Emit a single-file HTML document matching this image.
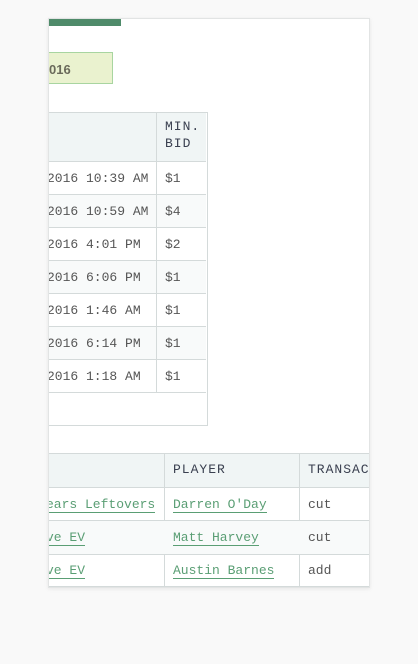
<!DOCTYPE html><html><head><style>
body{margin:0;background:#f9f9f9;width:418px;height:664px;position:relative;overflow:hidden;font-family:"Liberation Mono",monospace;}
.p{position:absolute;left:48px;top:18px;width:320px;height:568px;background:#fff;border:1px solid #e2e4e4;box-shadow:0 1px 4px rgba(0,0,0,.08);overflow:hidden}
.a{position:absolute}
.c{position:absolute;box-sizing:border-box;font-size:13px;color:#555;white-space:nowrap;line-height:33px}
a{color:#5a9e74;text-decoration:none;border-bottom:1px solid #5a9e74;line-height:15px;display:inline-block}
</style></head><body>
<div class="p">
<div class="a" style="left:0;top:0;width:72px;height:7px;background:#4f8b6a"></div>
<div class="a" style="left:-10px;top:33px;width:72px;height:30px;background:#eaf2cf;border:1px solid #a8d5a0"></div>
<div class="a" style="left:0;top:43px;font:bold 13px 'Liberation Sans',sans-serif;color:#6a6a5a">016</div>
<div class="a" style="left:-2px;top:93px;width:159px;height:312px;border:1px solid #d4dada"></div>
<div class="a" style="left:-1px;top:94px;width:158px;height:48px;background:#f0f5f5;border-bottom:1px solid #d4dada"></div>
<div class="a" style="left:107px;top:94px;width:1px;height:279px;background:#d4dada"></div>
<div class="c" style="left:116px;top:99px;line-height:17px;color:#3a4050;letter-spacing:1px">MIN.<br>BID</div>
<div id="t1"></div>
<div class="a" style="left:-1px;top:434px;width:330px;height:33px;background:#f0f5f5;border-top:1px solid #d4dada;border-bottom:1px solid #d4dada"></div>
<div class="a" style="left:115px;top:434px;width:1px;height:134px;background:#d4dada"></div>
<div class="a" style="left:250px;top:434px;width:1px;height:134px;background:#d4dada"></div>
<div class="c" style="left:124px;top:434px;color:#3a4050;letter-spacing:1px">PLAYER</div>
<div class="c" style="left:259px;top:434px;color:#3a4050;letter-spacing:1px">TRANSACTION</div>
<div class="a" style="left:0;top:501px;width:330px;height:33px;background:#f8fafa;border-top:1px solid #d4dada;border-bottom:1px solid #d4dada"></div>
<div class="c" style="left:-3px;top:469px"><a>ears Leftovers</a></div>
<div class="c" style="left:124px;top:469px"><a>Darren O'Day</a></div>
<div class="c" style="left:259px;top:469px">cut</div>
<div class="c" style="left:-3px;top:502px"><a>ve EV</a></div>
<div class="c" style="left:124px;top:502px"><a>Matt Harvey</a></div>
<div class="c" style="left:259px;top:502px">cut</div>
<div class="c" style="left:-3px;top:535px"><a>ve EV</a></div>
<div class="c" style="left:124px;top:535px"><a>Austin Barnes</a></div>
<div class="c" style="left:259px;top:535px">add</div>
<div class="a" style="left:0;top:567px;width:330px;height:1px;background:#d4dada"></div>
</div>
<script>
var d=["2016 10:39 AM|$1","2016 10:59 AM|$4","2016 4:01 PM|$2","2016 6:06 PM|$1","2016 1:46 AM|$1","2016 6:14 PM|$1","2016 1:18 AM|$1"],h="";
d.forEach(function(r,i){var t=143+i*33,p=r.split("|");
h+='<div class="a" style="left:-1px;top:'+t+'px;width:158px;height:33px;border-bottom:1px solid #d4dada;box-sizing:border-box;'+(i%2?'background:#f8fafa':'')+'"></div>'+
'<div class="a" style="left:107px;top:'+t+'px;width:1px;height:33px;background:#d4dada"></div>'+
'<div class="c" style="left:-2px;top:'+t+'px">'+p[0]+'</div><div class="c" style="left:116px;top:'+t+'px">'+p[1]+'</div>';});
document.getElementById("t1").outerHTML=h;
</script>
</body></html>
